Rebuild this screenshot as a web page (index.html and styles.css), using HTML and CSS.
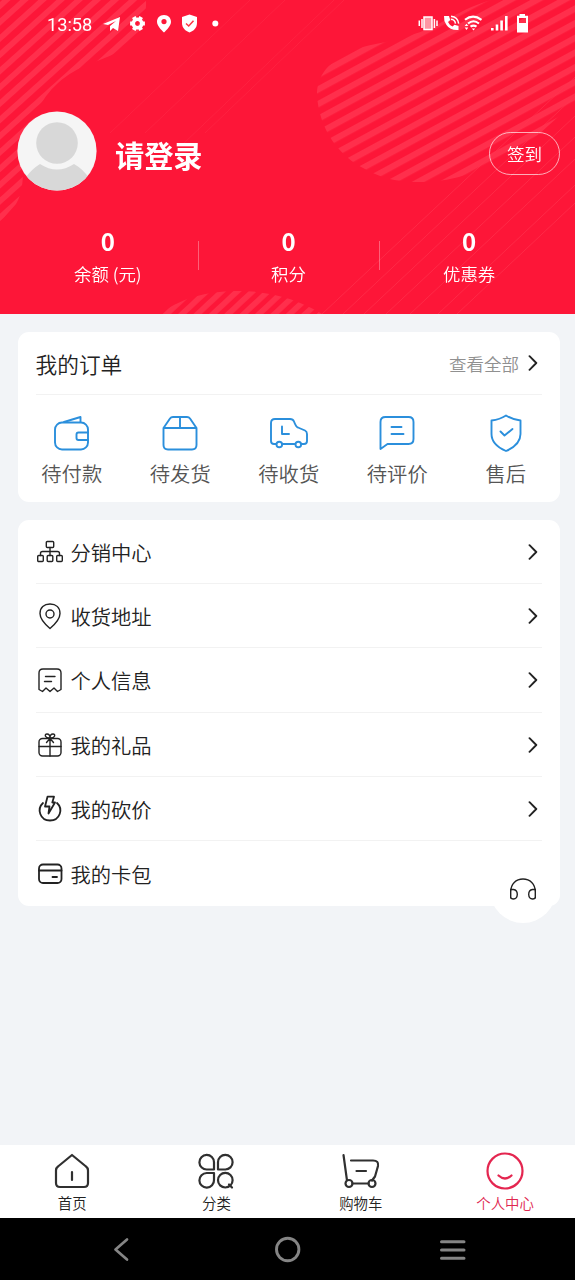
FILE: index.html
```html
<!DOCTYPE html>
<html lang="zh-CN">
<head>
<meta charset="utf-8">
<title>个人中心</title>
<link rel="stylesheet" href="styles.css">
</head>
<body>
<div class="screen">
  <header class="hero">
    <svg class="hero-bg" viewBox="0 0 575 314" aria-hidden="true">
      <defs>
        <pattern id="pl" width="20" height="12.1" patternUnits="userSpaceOnUse" patternTransform="translate(0 2) rotate(-42)"><rect width="20" height="5.6" fill="#ff2f4c"/></pattern>
        <pattern id="pr" width="20" height="12.9" patternUnits="userSpaceOnUse" patternTransform="translate(318 86) rotate(-28.5)"><rect width="20" height="6.2" fill="#ff2f4c"/></pattern>
        <pattern id="pb" width="20" height="10.5" patternUnits="userSpaceOnUse" patternTransform="translate(178 314) rotate(-43)"><rect width="20" height="5.6" fill="#ff2f4c"/></pattern>
      </defs>
      <path fill="url(#pl)" d="M0 0H146C147 24 136 43 118 52C99 62 78 65 58 83C40 99 30 122 25 150C22 170 25 190 16 204L0 222Z"/>
      <path fill="url(#pr)" d="M492 0C460 8 442 26 414 34C390 44 365 43 347 53C325 65 317 78 317 95C319 130 340 157 365 169C386 181 403 182 424 182C462 181 500 165 528 143C548 128 562 111 575 103V0Z"/>
      <path fill="url(#pb)" d="M160 314C185 295 213 291 240 291C270 291 300 300 322 314Z"/>
      <g stroke="#ff3650" stroke-width=".8" opacity=".8">
        <path d="M322 314L575 77M343 314L575 96M364 314L575 116M386 314L575 137M410 314L575 159M438 314L575 185M457 314L575 203"/>
        <path d="M110 133L250 0M145 133L285 0M182 145L334 0M205 133L344 0" opacity=".6"/>
      </g>
    </svg>
    <div class="status">
      <span class="clock">13:58</span>
      <svg class="st-left" width="120" height="22" viewBox="102 13 120 22" fill="#fff">
        <path d="M103 24L120 17L118 31L113 28L110 31V26L116 21L108 25Z"/>
        <g transform="translate(137.500 23.500)"><circle r="4.200" fill="none" stroke="#fff" stroke-width="3.600"/><g stroke="#fff" stroke-width="4"><path d="M-7.400 0H-5M5 0H7.400M-3.700-6.400L-2.500-4.300M2.500 4.300L3.700 6.400M3.700-6.400L2.500-4.300M-2.500 4.300L-3.700 6.400"/></g></g>
        <path fill-rule="evenodd" d="M164 15C159.500 15 157 18 157 22C157 26.500 164 32.500 164 32.500S171 26.500 171 22C171 18 168.500 15 164 15ZM164 19A2.600 2.600 0 1 1 164 24.200A2.600 2.600 0 1 1 164 19Z"/>
        <path d="M189.500 14.500L197 17V23C197 28 193.500 31 189.500 32.500C185.500 31 182 28 182 23V17Z"/><path d="M186 23.500L188.700 26L193.500 20.700" fill="none" stroke="#f34" stroke-width="1.500"/>
        <circle cx="215.300" cy="23.500" r="3"/>
      </svg>
      <svg class="st-right" width="114" height="22" viewBox="417 13 114 22" fill="#fff">
        <rect x="424" y="17" width="8" height="12.500" fill="#ff95a3" stroke="#fff" stroke-width="1.500"/><path d="M422 19V28M419.300 20.500V26M434.400 19V28M437 20.500V26" stroke="#fff" stroke-width="1.500"/>
        <path d="M445 16H449L450.200 20L448 22Q449.300 25 452.500 26.500L454.500 24.700L458.500 26V30Q450 30.500 446.500 25Q443.500 20.500 444 16Z"/><path d="M451 19.300Q455 19.700 455.500 23.700M451 16.200Q458 17 458.700 23.700" fill="none" stroke="#fff" stroke-width="1.500"/>
        <g fill="none" stroke="#fff" stroke-width="2.100"><path d="M465 19.800Q473 13.500 481.500 19.800M468 23.500Q473.500 19 479 23.500M470.500 26.700Q473.500 24.500 476.500 26.700"/></g><path d="M471.800 28.500H475.200L473.500 30.600ZM464.700 26L466.500 23.700L468.300 26ZM464.700 27.500L466.500 30L468.300 27.500Z"/>
        <path d="M491 28H493.600V30.500H491ZM495.700 24.500H498.300V30.500H495.700ZM500.300 20.500H502.900V30.500H500.300ZM505 16H507.600V30.500H505Z"/>
        <path fill-rule="evenodd" d="M519.500 14H525V15.800H528V32.500H517V15.800H519.500ZM519 18V23H526V18Z"/>
      </svg>
    </div>
    <div class="profile">
      <svg class="avatar" viewBox="0 0 80 80"><defs><clipPath id="av"><circle cx="40" cy="40" r="39.600"/></clipPath></defs><g clip-path="url(#av)"><path fill="#f5f5f5" d="M0 0H80V80H0Z"/><circle cx="40" cy="32" r="20.800" fill="#d8d8d8"/><path fill="#d8d8d8" d="M9 66Q15 58 23 53Q40 64 57 53Q66 58 72 67V80H9Z"/></g></svg>
      <div class="login">请登录</div>
      <div class="sign">签到</div>
    </div>
    <div class="stats">
      <div class="stat"><b>0</b><span>余额 (元)</span></div>
      <div class="stat"><b>0</b><span>积分</span></div>
      <div class="stat"><b>0</b><span>优惠券</span></div>
    </div>
  </header>

  <main class="content">
    <section class="card orders">
      <div class="orders-head"><h2>我的订单</h2><span class="all">查看全部</span><svg class="chev" viewBox="0 0 10 16"><path d="M1.500 1.200L8.300 8L1.500 14.800"/></svg></div>
      <div class="order-grid">
        <div class="order"><svg viewBox="0 0 40 40"><rect x="3" y="8.500" width="33" height="27" rx="7"/><path d="M12 8L28.500 3V8M36 18.500H26.500Q24.500 18.500 24.500 20.500V24Q24.500 26 26.500 26H36"/></svg><span>待付款</span></div>
        <div class="order"><svg viewBox="0 0 40 40"><path d="M3.500 14L10 4.500Q11 3 13 3H27Q29 3 30 4.500L36.500 14V31Q36.500 35.500 32 35.500H8Q3.500 35.500 3.500 31ZM3.500 14H36.500M20 3V14"/></svg><span>待发货</span></div>
        <div class="order"><svg viewBox="0 0 40 40"><path d="M7 30H5Q2 30 2 27V9Q2 5 6 5H21Q24 5 25 7.500Q27 13 29 13.500L36 16.500Q38 17.500 38 20V27Q38 30 35 30H32.500M13.500 30H25.500M13 12.500V20H20"/><circle cx="10.300" cy="30.500" r="2.800"/><circle cx="29.300" cy="30.500" r="2.800"/></svg><span>待收货</span></div>
        <div class="order"><svg viewBox="0 0 40 40"><path d="M3.500 35V8Q3.500 3 8.500 3H31.500Q36.500 3 36.500 8V25Q36.500 30 31.500 30H10.500ZM14.500 13H24.500M14.500 20H26.500"/></svg><span>待评价</span></div>
        <div class="order"><svg viewBox="0 0 40 40"><path d="M20 1.500Q26 5.500 34.500 6.500V20C34.500 29 27 34 20 37C13 34 5.500 29 5.500 20V6.500Q14 5.500 20 1.500ZM14.500 17.500L18.500 21.500L26.500 15"/></svg><span>售后</span></div>
      </div>
    </section>

    <section class="card menu">
      <div class="row"><svg class="ic" viewBox="0 0 28 28"><rect x="10.300" y="3.500" width="7.400" height="6" rx="1"/><rect x="1.700" y="17.500" width="5.600" height="6" rx="1"/><rect x="11.200" y="17.500" width="5.600" height="6" rx="1"/><rect x="20.700" y="17.500" width="5.600" height="6" rx="1"/><path d="M14 9.500V17.500M4.500 17.500V15.500Q4.500 13.500 6.500 13.500H21.500Q23.500 13.500 23.500 15.500V17.500"/></svg><span>分销中心</span><svg class="chev" viewBox="0 0 10 16"><path d="M1.500 1.200L8.300 8L1.500 14.800"/></svg></div>
      <div class="row"><svg class="ic" viewBox="0 0 28 28"><path d="M14 26.500Q4 18 4 11.500C4 5.500 8 2 14 2S24 5.500 24 11.500Q24 18 14 26.500Z"/><circle cx="14" cy="12" r="4"/></svg><span>收货地址</span><svg class="chev" viewBox="0 0 10 16"><path d="M1.500 1.200L8.300 8L1.500 14.800"/></svg></div>
      <div class="row"><svg class="ic" viewBox="0 0 28 28"><path d="M3 23.500V7Q3 3 7 3H21Q25 3 25 7V23.500L21.500 25.500L18 22L14 25.500L10 22L6.500 25.500ZM9.500 10.500H19M8.500 15.500H15.500"/></svg><span>个人信息</span><svg class="chev" viewBox="0 0 10 16"><path d="M1.500 1.200L8.300 8L1.500 14.800"/></svg></div>
      <div class="row"><svg class="ic" viewBox="0 0 28 28"><rect x="3" y="7.500" width="22" height="17.500" rx="3.500"/><path d="M14 7.500V25M3 15.500H25M14 7C9 7.500 8 3 11 3C13.300 3 14 5 14 7C14 5 14.700 3 17 3C20 3 19 7.500 14 7M14 7.500L10.500 11.500M14 7.500L17.500 11.500"/></svg><span>我的礼品</span><svg class="chev" viewBox="0 0 10 16"><path d="M1.500 1.200L8.300 8L1.500 14.800"/></svg></div>
      <div class="row"><svg class="ic bold" viewBox="0 0 28 28"><path d="M7 8C.500 14 4 25.500 14 25.500S27.500 14 21 8M11.500 1.700H18L16.300 7.500H19L12.500 18.500L13.500 11.500H9Z"/></svg><span>我的砍价</span><svg class="chev" viewBox="0 0 10 16"><path d="M1.500 1.200L8.300 8L1.500 14.800"/></svg></div>
      <div class="row"><svg class="ic bold" viewBox="0 0 28 28"><rect x="3" y="4.500" width="22.500" height="18.500" rx="4"/><path d="M3 10.500H25.500M16.500 17H21"/></svg><span>我的卡包</span></div>
      <div class="service"><svg viewBox="0 0 30 26"><path d="M2.700 21.500V15C2.700 7 8 2 15 2S27.300 7 27.300 15V21.500M2.700 12.500H5.500Q9.300 13 9.300 17.500Q9 22 5.500 22Q2.700 22 2.700 20ZM27.300 12.500H24.500Q20.700 13 20.700 17.500Q21 22 24.500 22Q27.300 22 27.300 20Z"/></svg></div>
    </section>
  </main>

  <nav class="tabs">
    <div class="tab"><svg viewBox="0 0 40 40"><path d="M20 3L34 14.500Q36 16 36 18.500V31Q36 35 32 35H8Q4 35 4 31V18.500Q4 16 6 14.500ZM20 20V28"/></svg><span>首页</span></div>
    <div class="tab"><svg viewBox="0 0 40 40"><path d="M18 17.500H11A7.300 7.300 0 1 1 18 10.200ZM22 17.500V10.200A7.300 7.300 0 1 1 29.300 17.500ZM18 21V28A7.300 7.300 0 1 1 10.700 21ZM33 32.500L36 35.500"/><circle cx="29.300" cy="28.200" r="7.300"/></svg><span>分类</span></div>
    <div class="tab"><svg viewBox="0 0 40 40"><path d="M2.500 3L6 28.500M10 8.500H32Q38 8.500 37 14L34 24.500L31 28.500M11.500 31.500H27.500M15.500 19H25"/><circle cx="8" cy="31.500" r="3.500"/><circle cx="31" cy="31.500" r="3.500"/></svg><span>购物车</span></div>
    <div class="tab active"><svg viewBox="0 0 40 40"><circle cx="20" cy="19" r="17.500"/><path d="M13.500 23.500Q20 29.500 26.500 23.500"/></svg><span>个人中心</span></div>
  </nav>
  <div class="sysbar">
    <svg viewBox="0 0 575 62"><path d="M127 21.500L115.500 31.500L127 41.500" stroke-width="2.700"/><circle cx="287.700" cy="31.500" r="11.200" stroke-width="2.900"/><path d="M441.500 23.800H464M441.500 32H464M441.500 40.300H464" stroke-width="3"/></svg>
  </div>
</div>
</body>
</html>
```
FILE: styles.css
```css
* { box-sizing: border-box; }
body {
  margin: 0;
  background: #f2f4f7;
  font-family: "Noto Sans CJK SC", sans-serif;
  font-weight: 350;
  color: #222;
}
svg { display: block; flex: none; }
.screen {
  width: 575px;
  height: 1280px;
  display: flex;
  flex-direction: column;
  overflow: hidden;
}
.hero {
  position: relative;
  height: 314px;
  flex: none;
  background: #fd1638;
  color: #fff;
}
.hero-bg { position: absolute; inset: 0; width: 575px; height: 314px; }
.status, .profile, .stats { position: relative; display: flex; }
.status { height: 48px; padding: 13px 44px 0 47px; align-items: flex-start; }
.clock { font: 400 18.200px/23px Roboto, sans-serif; width: 55px; white-space: nowrap; }
.st-right { margin-left: auto; }
.profile { height: 80px; margin-top: 63px; padding: 0 15px 0 17px; align-items: center; }
.avatar { width: 80px; height: 80px; }
.login { margin-left: 18px; padding-top: 5px; font-size: 29.200px; line-height: 40px; font-weight: 700; }
.sign {
  margin: 5px 0 0 auto;
  width: 71px;
  height: 43px;
  border: 1px solid rgba(255,255,255,.65);
  border-radius: 22px;
  font-size: 17.500px;
  line-height: 42px;
  text-align: center;
}
.stats { margin: 36px 15.500px 0 17.500px; }
.stat { position: relative; flex: 1; display: flex; flex-direction: column; align-items: center; }
.stat + .stat::before { content: ""; position: absolute; left: 0; top: 14px; width: 1px; height: 29px; background: rgba(255,255,255,.32); }
.stat b { font-size: 24px; line-height: 28px; font-weight: 600; }
.stat span { margin-top: 6px; font-size: 17.400px; line-height: 26px; }
.content { flex: 1; padding: 17.500px 15px 0 17.500px; }
.card { background: #fff; border-radius: 11px; padding: 0 18px; }
.orders { height: 170.500px; }
.orders-head { height: 63.500px; border-bottom: 1px solid #f2f2f2; display: flex; align-items: center; }
.orders-head h2 { margin: 3px auto 0 0; font-size: 21.700px; line-height: 32px; font-weight: 350; }
.all { font-size: 17.500px; line-height: 26px; color: #909090; margin: 2px 9px 0 0; }
.chev { width: 10px; height: 16px; margin: 1px 4px 0 0; fill: none; stroke: #222; stroke-width: 1.900; stroke-linecap: round; stroke-linejoin: round; }
.order-grid { display: flex; margin: 0 -18px; padding-top: 19px; }
.order { flex: 1; display: flex; flex-direction: column; align-items: center; }
.order svg { width: 40px; height: 40px; fill: none; stroke: #2b8fdc; stroke-width: 1.900; stroke-linejoin: round; stroke-linecap: round; }
.order span { font-size: 20.300px; line-height: 30px; margin-top: 4px; color: #555; }
.menu { position: relative; margin-top: 17.500px; height: 386px; }
.row { height: 64.400px; display: flex; align-items: center; border-bottom: 1px solid #f2f2f2; }
.row:nth-child(6) { border-bottom: 0; }
.row span { margin: 1px auto 0 7px; font-size: 20.300px; line-height: 30px; }
.ic { width: 28px; height: 28px; margin-top: 1px; fill: none; stroke: #222; stroke-width: 1.400; stroke-linejoin: round; stroke-linecap: round; }
.ic.bold { stroke-width: 1.800; }
.service { position: absolute; right: 4px; bottom: -17.500px; width: 66px; height: 66px; border-radius: 50%; background: #fff; display: flex; align-items: center; justify-content: center; }
.service svg { width: 30px; height: 26px; fill: none; stroke: #222; stroke-width: 1.400; }
.tabs { height: 73px; flex: none; background: #fff; display: grid; grid-template-columns: repeat(4, 144.300px); }
.tab { display: flex; flex-direction: column; align-items: center; padding-top: 7px; }
.tab svg { width: 40px; height: 40px; fill: none; stroke: #303030; stroke-width: 2.200; stroke-linejoin: round; stroke-linecap: round; }
.tab span { font-size: 14.400px; line-height: 20px; margin-top: 1px; }
.tab.active { color: #e02850; }
.tab.active svg { stroke: #e42650; }
.sysbar { height: 62px; flex: none; background: #000; }
.sysbar svg { width: 575px; height: 62px; fill: none; stroke: #858585; stroke-linecap: round; stroke-linejoin: round; }
```
